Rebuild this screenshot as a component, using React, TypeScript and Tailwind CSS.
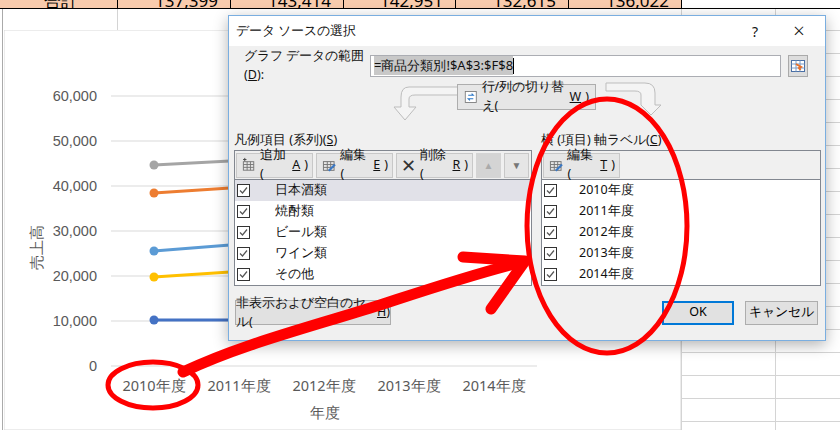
import React from "react";

function Check() {
  return (
    <span className="w-[13px] h-[13px] border border-[#333] bg-white flex items-center justify-center">
      <svg width="11" height="11" viewBox="0 0 11 11"><path d="M2 5.5 L4.5 8 L9 2.5" fill="none" stroke="#555" strokeWidth="1.2" /></svg>
    </span>
  );
}

function GridIcon({ pen, plus }: { pen?: boolean; plus?: boolean }) {
  return (
    <svg width="16" height="16" viewBox="0 0 16 16">
      <g stroke="#777" strokeWidth="1" fill="none">
        <rect x="2.5" y="4.5" width="11" height="9" />
        <path d="M2.5 7.5H13.5M2.5 10.5H13.5M6.5 4.5V13.5M10 4.5V13.5" />
      </g>
      {plus && <path d="M4 0.5V4M2.2 2.2H5.8" stroke="#444" />}
      {pen && <path d="M8 14 L14.5 7.5" stroke="#3a78c4" strokeWidth="2.2" />}
    </svg>
  );
}

function Row({ label, sel, indent = "pl-[24px]" }: { label: string; sel?: boolean; indent?: string }) {
  return (
    <div className={`h-[21px] flex items-center pl-[2px] ${sel ? "bg-[#e1e1e8]" : ""}`}>
      <Check />
      <span className={`${indent} text-[12.5px] text-[#111]`}>{label}</span>
    </div>
  );
}

function TB({ children, className = "" }: { children: React.ReactNode; className?: string }) {
  return (
    <div className={`h-[25px] flex items-center gap-[4px] px-[4px] border border-[#c8c8c8] bg-[#e6e6e6] text-[12.5px] text-[#111] ${className}`}>
      {children}
    </div>
  );
}

const LS = "font-['Liberation_Sans','Noto_Sans_CJK_JP',sans-serif]";

export default function App() {
  const cols = ["w-[117px]", "w-[113px]", "w-[113px]", "w-[112px]", "w-[113px]", "w-[113px]"];
  const vals = ["合計", "137,399", "143,414", "142,951", "132,615", "136,022"];
  return (
    <div className="relative w-[840px] h-[430px] bg-white overflow-hidden font-['Noto_Sans_CJK_JP','Noto_Sans',sans-serif]">
      <div className="flex h-[9px] border-b border-black">
        {cols.map((w, i) => (
          <div key={i} className={`relative overflow-hidden bg-[#f8cbad] ${w} ${i > 0 ? "border-l border-black" : ""}`}>
            <span className={`absolute top-[-12px] text-[17px] text-black ${LS} ${i === 0 ? "left-[44px]" : "right-[12px]"}`}>{vals[i]}</span>
          </div>
        ))}
        <div className="flex-1 border-l border-black" />
      </div>
      <div className="absolute left-[681px] top-[9px] w-[159px] h-[421px] bg-[linear-gradient(#d4d4d4_1px,transparent_1px),linear-gradient(90deg,#d4d4d4_1px,transparent_1px)] bg-[size:94px_23px] bg-[position:0_-2px]" />
      <div className="absolute left-[0px] top-[9px] w-[3px] h-[421px] bg-white border-r border-[#aaa]" />
      <div className="absolute left-[117px] top-[9px] w-px h-[21px] bg-[#d4d4d4]" />
      <svg className="absolute left-[4px] top-[30px]" width="677" height="400" viewBox="4 30 677 400">
        <rect x="4" y="30" width="677" height="400" fill="white" stroke="#d9d9d9" />
        {[96, 141, 186, 231, 276, 321, 366].map((y, i) => (
          <g key={y}>
            <line x1="111" x2="537" y1={y} y2={y} stroke="#d9d9d9" />
            <text x="97" y={y + 5} textAnchor="end" fontSize="14.5" fill="#595959" fontFamily="Liberation Sans, sans-serif">
              {["60,000", "50,000", "40,000", "30,000", "20,000", "10,000", "0"][i]}
            </text>
          </g>
        ))}
        {([["#a5a5a5", 165, 161], ["#ed7d31", 193, 188], ["#5b9bd5", 251, 245], ["#ffc000", 277, 272], ["#4472c4", 320, 320]] as [string, number, number][]).map(([c, a, b]) => (
          <g key={c}>
            <line x1="154" y1={a} x2="230" y2={b} stroke={c} strokeWidth="3" />
            <circle cx="154" cy={a} r="4.5" fill={c} />
          </g>
        ))}
        {["2010年度", "2011年度", "2012年度", "2013年度", "2014年度"].map((t, i) => (
          <text key={t} x={154 + i * 85} y="391" textAnchor="middle" fontSize="14.5" fill="#595959">{t}</text>
        ))}
        <text x="325" y="418" textAnchor="middle" fontSize="15" fill="#595959">年度</text>
        <text x="0" y="0" transform="translate(42 247) rotate(-90)" textAnchor="middle" fontSize="15" fill="#595959">売上高</text>
      </svg>

      <div className="absolute left-[228px] top-[15px] w-[598px] h-[326px] border border-[#7aaee0] bg-[#f0f0f0] shadow-[0_4px_14px_rgba(0,0,0,0.3)] flex flex-col">
        <div className="h-[30px] bg-white flex items-center pl-[7px] text-[12.5px] text-[#111]">
          <span className="flex-1">データ ソースの選択</span>
          <span className={`w-[44px] text-center text-[14px] ${LS}`}>?</span>
          <span className="w-[44px] text-center text-[20px] font-light mr-[4px]">×</span>
        </div>
        <div className="flex items-center h-[21px] mt-[9px] pl-[15px] text-[12.5px] text-[#111]">
          <span className="w-[126px]">グラフ データの範囲(<u>D</u>):</span>
          <div className="w-[411px] h-[22px] border border-[#abadb3] bg-white flex items-center pl-[3px]">
            <span className="bg-[#c8c8c8] text-[13px]">=商品分類別!$A$3:$F$8</span>
            <span className="w-px h-[16px] bg-black" />
          </div>
          <div className="ml-[7px] w-[20px] h-[22px] border border-[#aaa] bg-[#ddd] flex items-center justify-center">
            <svg width="14" height="12" viewBox="0 0 14 12"><rect x="0.5" y="0.5" width="13" height="11" fill="#fff" stroke="#4a6fa5" /><path d="M0.5 4H13.5M0.5 8H13.5M5 0.5V11.5M9 0.5V11.5" stroke="#7a9cc8" /><path d="M5 4L10 7L8 8L9.5 10" stroke="#e8702a" strokeWidth="2" fill="none" /></svg>
          </div>
        </div>
        <div className="relative h-[48px] mt-[6px]">
          <svg className="absolute left-[160px] top-[1px]" width="70" height="40" viewBox="0 0 70 40">
            <path d="M69 4 H20 Q12 4 12 14 V24 H5 L16 37 L27 24 H20 V16 Q20 12 26 12 H69" fill="#f4f4f4" stroke="#bdbdbd" />
          </svg>
          <svg className="absolute left-[376px] top-[-1px]" width="62" height="40" viewBox="0 0 62 40">
            <path d="M1 2 H40 Q50 2 50 12 V24 H56 L46 34 L36 24 V14 Q36 10 30 10 H1Z" fill="#f4f4f4" stroke="#bdbdbd" />
          </svg>
          <div className="absolute left-[228px] top-[2px] w-[139px] h-[26px] border border-[#adadad] bg-[#e6e6e6] flex items-center gap-[4px] px-[6px] text-[12.5px] text-[#111]">
            <svg width="16" height="16" viewBox="0 0 16 16"><rect x="1.5" y="1.5" width="13" height="13" fill="#fff" stroke="#777" /><path d="M5 6H11L9 4M11 10H5L7 12" stroke="#2c78c8" fill="none" strokeWidth="1.3" /></svg>
            行/列の切り替え(<u>W</u>)
          </div>
        </div>
        <div className="flex gap-[9px] pl-[5px]">
          <div className="w-[298px] flex flex-col">
            <div className="h-[20px] text-[12.5px] text-[#111] leading-[20px]">凡例項目 (系列)(<u>S</u>)</div>
            <div className="h-[136px] border border-[#828790] bg-white">
              <div className="h-[29px] bg-[#f0f0f0] border-b border-[#828790] flex items-center gap-[3px] pl-[1px]">
                <TB className="w-[77px]"><GridIcon plus />追加(<u>A</u>)</TB>
                <TB className="w-[77px]"><GridIcon pen />編集(<u>E</u>)</TB>
                <TB className="w-[77px]"><span className="text-[18px] leading-none text-[#333]">✕</span>削除(<u>R</u>)</TB>
                <div className="w-[25px] h-[25px] bg-[#d4d4d4] flex items-center justify-center text-[10px] text-[#aaa]">▲</div>
                <div className="w-[25px] h-[25px] border border-[#c8c8c8] bg-[#e6e6e6] flex items-center justify-center text-[10px] text-[#777]">▼</div>
              </div>
              <div className="pr-[1px]">
                <Row label="日本酒類" sel indent="pl-[25px]" />
                <Row label="焼酎類" indent="pl-[25px]" />
                <Row label="ビール類" indent="pl-[25px]" />
                <Row label="ワイン類" indent="pl-[25px]" />
                <Row label="その他" indent="pl-[25px]" />
              </div>
            </div>
          </div>
          <div className="w-[280px] flex flex-col">
            <div className="h-[20px] text-[12.5px] text-[#111] leading-[20px]">横 (項目) 軸ラベル(<u>C</u>)</div>
            <div className="h-[136px] border border-[#828790] bg-white">
              <div className="h-[29px] bg-[#f0f0f0] border-b border-[#828790] flex items-center pl-[1px]">
                <TB className="w-[77px]"><GridIcon pen />編集(<u>T</u>)</TB>
              </div>
              {["2010年度", "2011年度", "2012年度", "2013年度", "2014年度"].map(t => <Row key={t} label={t} indent="pl-[22px]" />)}
            </div>
          </div>
        </div>
        <div className="flex items-center mt-[14px] pl-[6px] pr-[7px]">
          <div className="w-[156px] h-[25px] border border-[#adadad] bg-[#e1e1e1] text-[12.5px] text-[#111] flex items-center justify-center">非表示および空白のセル(<u>H</u>)</div>
          <div className="flex-1" />
          <div className={`w-[72px] h-[24px] border-2 border-[#0078d7] bg-[#e1e1e1] text-[12.5px] flex items-center justify-center ${LS}`}>OK</div>
          <div className="w-[73px] h-[24px] ml-[11px] border border-[#adadad] bg-[#e1e1e1] text-[12.5px] flex items-center justify-center">キャンセル</div>
        </div>
      </div>

      <svg className="absolute left-0 top-0 pointer-events-none" width="840" height="430">
        <ellipse cx="153" cy="385" rx="45" ry="23" fill="none" stroke="#ff0000" strokeWidth="5" />
        <ellipse cx="607" cy="226" rx="80" ry="127" fill="none" stroke="#ff0000" strokeWidth="5" />
        <path d="M183 372 C 240 345, 300 330, 380 305 C 420 292, 470 275, 522 262" fill="none" stroke="#ff0000" strokeWidth="11" strokeLinecap="round" />
        <path d="M463 257 L 525 261 L 491 309" fill="none" stroke="#ff0000" strokeWidth="11" strokeLinecap="round" strokeLinejoin="round" />
      </svg>
    </div>
  );
}
